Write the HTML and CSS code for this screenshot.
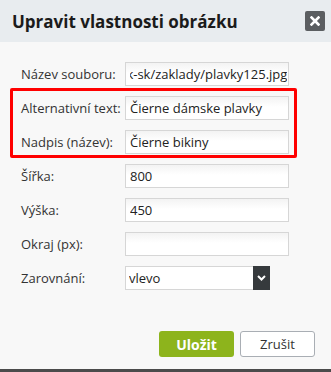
FILE: index.html
```html
<!DOCTYPE html>
<html lang="cs">
<head>
    <meta charset="UTF-8">
    <meta name="viewport" content="width=device-width, initial-scale=1.0">
    <title>Upravit vlastnosti obrázku</title>
    <link rel="stylesheet" href="styles.css">
</head>
<body>
    <div class="dialog">
        <div class="dialog-header">
            <h1 class="dialog-title">Upravit vlastnosti obrázku</h1>
            <button type="button" class="close-btn" aria-label="Zavřít">
                <svg width="10" height="10" viewBox="0 0 10 10">
                    <path d="M1.5 1.5 L8.5 8.5 M8.5 1.5 L1.5 8.5" stroke="#fff" stroke-width="2.6" stroke-linecap="square"/>
                </svg>
            </button>
        </div>

        <form class="props-form">
            <!-- soubor -->
            <div class="row">
                <label for="src">Název souboru:</label>
                <input type="text" id="src" value="/media/images/sk-sk/zaklady/plavky125.jpg">
            </div>

            <!-- zvýrazněné popisky -->
            <div class="highlight">
                <div class="row">
                    <label for="alt">Alternativní text:</label>
                    <input type="text" id="alt" value="Čierne dámske plavky">
                </div>
                <div class="row">
                    <label for="title">Nadpis (název):</label>
                    <input type="text" id="title" value="Čierne bikiny">
                </div>
            </div>

            <div class="row">
                <label for="width">Šířka:</label>
                <input type="text" id="width" value="800">
            </div>
            <div class="row">
                <label for="height">Výška:</label>
                <input type="text" id="height" value="450">
            </div>
            <div class="row">
                <label for="border">Okraj (px):</label>
                <input type="text" id="border" value="">
            </div>
            <div class="row">
                <label for="align">Zarovnání:</label>
                <div class="select-wrap">
                    <select id="align">
                        <option>vlevo</option>
                        <option>vpravo</option>
                        <option>na střed</option>
                    </select>
                    <span class="select-arrow">
                        <svg width="9" height="6" viewBox="0 0 9 6">
                            <path d="M1 1 L4.5 4.5 L8 1" fill="none" stroke="#fff" stroke-width="2"/>
                        </svg>
                    </span>
                </div>
            </div>

            <div class="actions">
                <button type="submit" class="btn btn-save">Uložit</button>
                <button type="button" class="btn btn-cancel">Zrušit</button>
            </div>
        </form>
    </div>
    <div class="page-strip"></div>

    <script>
        // cesta k souboru - zobrazit konec
        const src = document.getElementById('src');
        src.scrollLeft = src.scrollWidth;
    </script>
</body>
</html>
```

FILE: styles.css
```css
body {
    margin: 0;
    font-family: "Open Sans", "Liberation Sans", sans-serif;
    font-size: 13px;
    color: #333;
    background-color: #f8f8f8;
}
.dialog {
    height: 369px;
    background-color: #f8f8f8;
}
.dialog-header {
    height: 42px;
    display: flex;
    align-items: center;
    justify-content: space-between;
    padding: 0 6px 0 12px;
    background-color: #e8ecef;
}
.dialog-title {
    margin: 0;
    font-size: 17px;
    font-weight: bold;
    color: #1b1b1b;
}
.close-btn {
    width: 20px;
    height: 20px;
    padding: 0;
    border: none;
    border-radius: 2px;
    background-color: #5b5e61;
    display: flex;
    align-items: center;
    justify-content: center;
    margin-top: -1px;
    cursor: pointer;
}
.props-form {
    width: 287px;
    margin: 20px 0 0 10px;
    display: flex;
    flex-direction: column;
    gap: 10px;
}
.row {
    display: grid;
    grid-template-columns: 104px 164px;
    align-items: center;
    padding-left: 11px;
    height: 24px;
}
.highlight {
    display: flex;
    flex-direction: column;
    gap: 10px;
    margin: -8px 0 -4px;
    padding: 5px 0 1px;
    border: 3px solid #f00;
    border-radius: 2px;
}
.highlight .row {
    padding-left: 8px;
}
input[type="text"] {
    box-sizing: border-box;
    width: 164px;
    height: 24px;
    padding: 0 4px;
    border: 1px solid #d6d6d6;
    background: linear-gradient(#f3f3f3, #fff 45%);
    font-family: inherit;
    font-size: 13px;
    color: #222;
    outline: none;
}
#src {
    padding-right: 1px;
}
.select-wrap {
    display: flex;
    width: 145px;
    height: 24px;
}
.select-wrap select {
    box-sizing: border-box;
    flex: 1;
    height: 24px;
    padding: 0 3px;
    border: 1px solid #d6d6d6;
    border-right: none;
    background-color: #fff;
    font-family: inherit;
    font-size: 13px;
    color: #222;
    appearance: none;
    -webkit-appearance: none;
    outline: none;
}
.select-arrow {
    width: 17px;
    display: flex;
    align-items: center;
    justify-content: center;
    background-color: #363a3d;
}
.actions {
    display: flex;
    justify-content: flex-end;
    gap: 6px;
    margin: 31px -18px 0 0;
}
.btn {
    box-sizing: border-box;
    width: 75px;
    height: 26px;
    border-radius: 3px;
    font-family: inherit;
    font-size: 13px;
    cursor: pointer;
}
.btn-save {
    border: none;
    background-color: #8db41c;
    color: #fff;
    font-weight: bold;
    font-size: 14px;
}
.btn-cancel {
    border: 1px solid #a9aeb4;
    background-color: #fff;
    color: #333;
}
.page-strip {
    height: 3px;
    background-color: #4b4b4b;
}
```
